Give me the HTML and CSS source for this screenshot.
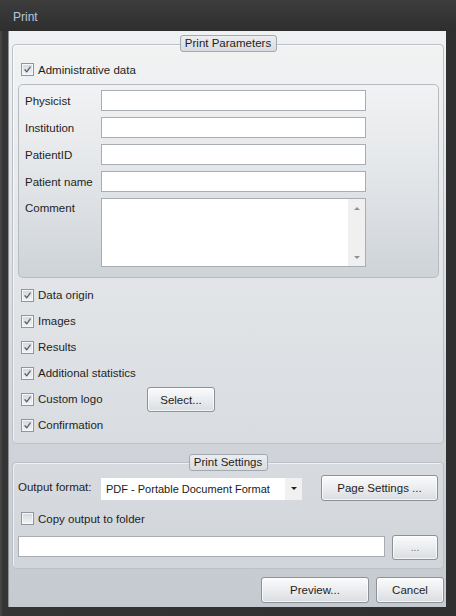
FILE: index.html
```html
<!DOCTYPE html>
<html>
<head>
<meta charset="utf-8">
<title>Print</title>
<link rel="stylesheet" href="styles.css">
</head>
<body>
<div class="window">
  <div class="titlebar">Print</div>
  <div class="client">
    <div class="group group-params">
      <div class="legend legend-params">Print Parameters</div>
      <div class="check check-admin"><span class="box checked"><svg viewBox="0 0 13 13"><path d="M3.5 6.8 L5.6 9.2 L9.6 3.6"/></svg></span>Administrative data</div>
      <div class="admin">
        <div class="field-row"><span class="flabel">Physicist</span><span class="input"></span></div>
        <div class="field-row"><span class="flabel">Institution</span><span class="input"></span></div>
        <div class="field-row"><span class="flabel">PatientID</span><span class="input"></span></div>
        <div class="field-row"><span class="flabel">Patient name</span><span class="input"></span></div>
        <div class="field-row comment-row"><span class="flabel">Comment</span><span class="textarea"><span class="scroll"><span class="arrow up"></span><span class="arrow down"></span></span></span></div>
      </div>
      <div class="checks">
        <div class="check-row"><span class="check"><span class="box checked"><svg viewBox="0 0 13 13"><path d="M3.5 6.8 L5.6 9.2 L9.6 3.6"/></svg></span>Data origin</span></div>
        <div class="check-row"><span class="check"><span class="box checked"><svg viewBox="0 0 13 13"><path d="M3.5 6.8 L5.6 9.2 L9.6 3.6"/></svg></span>Images</span></div>
        <div class="check-row"><span class="check"><span class="box checked"><svg viewBox="0 0 13 13"><path d="M3.5 6.8 L5.6 9.2 L9.6 3.6"/></svg></span>Results</span></div>
        <div class="check-row"><span class="check"><span class="box checked"><svg viewBox="0 0 13 13"><path d="M3.5 6.8 L5.6 9.2 L9.6 3.6"/></svg></span>Additional statistics</span></div>
        <div class="check-row"><span class="check check-wide"><span class="box checked"><svg viewBox="0 0 13 13"><path d="M3.5 6.8 L5.6 9.2 L9.6 3.6"/></svg></span>Custom logo</span><span class="btn btn-select">Select...</span></div>
        <div class="check-row"><span class="check"><span class="box checked"><svg viewBox="0 0 13 13"><path d="M3.5 6.8 L5.6 9.2 L9.6 3.6"/></svg></span>Confirmation</span></div>
      </div>
    </div>
    <div class="group group-settings">
      <div class="legend legend-settings">Print Settings</div>
      <div class="out-row">
        <span class="olabel">Output format:</span>
        <span class="combo"><span class="combo-text">PDF - Portable Document Format</span><span class="combo-arrow"><span class="tri"></span></span></span>
        <span class="btn btn-page">Page Settings ...</span>
      </div>
      <div class="check copy-row"><span class="box"></span>Copy output to folder</div>
      <div class="folder-row"><span class="input folder"></span><span class="btn btn-dots">...</span></div>
    </div>
    <div class="footer"><span class="btn btn-preview">Preview...</span><span class="btn btn-cancel">Cancel</span></div>
  </div>
</div>
</body>
</html>
```

FILE: styles.css
```css
html, body {
  margin: 0;
  padding: 0;
  background: #2f2f2f;
}
body {
  font-family: "Liberation Sans", Arial, sans-serif;
  font-size: 11.5px;
  color: #1e1e1e;
}
.window {
  width: 456px;
  height: 616px;
  box-sizing: border-box;
  background: linear-gradient(to right, #4a4a4a 0px, #343434 3px, #303030 100%);
  padding: 0 10px 9px 8px;
  display: flex;
  flex-direction: column;
}
.titlebar {
  height: 31px;
  box-sizing: border-box;
  padding: 10px 0 0 13px;
  color: #b7c8dd;
  font-size: 12px;
  background: linear-gradient(#3d3d3d, #2e2e2e);
  margin: 0 -10px 0 -8px;
}
.client {
  flex: 1;
  background: linear-gradient(#eff1f2 0%, #e0e3e6 35%, #d1d5da 70%, #c5cad0 100%);
  display: flex;
  flex-direction: column;
  box-shadow: inset 1px 0 0 #8d9298;
}
.group {
  margin: 0 2px 0 4px;
  border: 1px solid #bcc1c7;
  border-radius: 4px;
  background: rgba(255, 255, 255, 0.18);
  box-shadow: inset 1px 1px 0 rgba(255,255,255,0.6);
  display: flex;
  flex-direction: column;
}
.group-params {
  margin-top: 13px;
  padding-bottom: 5px;
}
.group-params .legend {
  margin-top: -10px;
  margin-bottom: 1px;
}
.group-settings {
  margin-top: 18px;
  padding: 0 5px 8px 5px;
}
.legend {
  align-self: center;
  height: 17px;
  box-sizing: border-box;
  margin-top: -9px;
  border: 1px solid #a4a9b0;
  border-radius: 3px;
  background: linear-gradient(#eceef0, #d8dce0);
  line-height: 15px;
  font-size: 11.5px;
  text-align: center;
  color: #1e1e1e;
}
.legend-params { width: 97px; }
.legend-settings { width: 79px; }
.check {
  display: flex;
  align-items: center;
  gap: 4px;
  height: 13px;
}
.check-admin {
  margin: 10px 0 0 8px;
}
.box {
  width: 13px;
  height: 13px;
  box-sizing: border-box;
  border: 1px solid #8f969e;
  background: linear-gradient(#d3d7dc, #f4f5f6);
  box-shadow: inset 0 0 0 1px #f6f7f8;
  flex: none;
  display: flex;
}
.box svg {
  width: 11px;
  height: 11px;
}
.box path {
  fill: none;
  stroke: #56636f;
  stroke-width: 1.5;
  stroke-linejoin: round;
  stroke-linecap: round;
}
.admin {
  margin: 8px 4px 0 5px;
  border: 1px solid #b7bcc2;
  border-radius: 5px;
  background: linear-gradient(#f1f2f3, #e2e5e8 50%, #ced3d8);
  padding: 5px 0 10px 6px;
  display: flex;
  flex-direction: column;
  gap: 6px;
}
.field-row {
  display: flex;
  align-items: center;
}
.comment-row {
  align-items: flex-start;
}
.comment-row .flabel {
  padding-top: 4px;
}
.flabel {
  width: 76px;
  flex: none;
}
.input {
  width: 265px;
  height: 21px;
  box-sizing: border-box;
  border: 1px solid #a8adb3;
  background: #ffffff;
  display: block;
}
.textarea {
  width: 265px;
  height: 69px;
  box-sizing: border-box;
  border: 1px solid #a8adb3;
  background: #ffffff;
  display: flex;
  justify-content: flex-end;
}
.scroll {
  width: 17px;
  background: #f0f0f0;
  display: flex;
  flex-direction: column;
  justify-content: space-between;
  align-items: center;
  padding: 8px 0 7px 0;
}
.arrow {
  width: 0;
  height: 0;
  border-left: 3px solid transparent;
  border-right: 3px solid transparent;
}
.arrow.up { border-bottom: 3px solid #8d9196; }
.arrow.down { border-top: 3px solid #8d9196; }
.checks {
  margin-top: 4px;
  display: flex;
  flex-direction: column;
}
.check-row {
  height: 26px;
  display: flex;
  align-items: center;
  padding-left: 8px;
}
.check-wide {
  width: 126px;
}
.btn {
  box-sizing: border-box;
  border: 1px solid #8c9198;
  border-radius: 3px;
  background: linear-gradient(#fbfbfc, #eceef0 45%, #dadde1);
  box-shadow: inset 0 0 0 1px rgba(255,255,255,0.7);
  display: flex;
  align-items: center;
  justify-content: center;
  color: #1e1e1e;
  font-size: 11.5px;
}
.btn-select {
  width: 68px;
  height: 25px;
  margin-top: 1px;
}
.out-row {
  margin-top: 4px;
  height: 26px;
  display: flex;
  align-items: center;
}
.olabel {
  width: 83px;
  flex: none;
  margin-top: -2px;
}
.combo {
  width: 201px;
  height: 22px;
  background: #ffffff;
  display: flex;
  align-items: center;
  margin-top: 1px;
}
.combo-text {
  flex: 1;
  padding-left: 5px;
  font-size: 11px;
  color: #1a1a1a;
  white-space: nowrap;
}
.combo-arrow {
  width: 17px;
  height: 22px;
  background: #f1f1f1;
  display: flex;
  align-items: center;
  justify-content: center;
}
.tri {
  width: 0;
  height: 0;
  border-left: 3px solid transparent;
  border-right: 3px solid transparent;
  border-top: 3px solid #222;
}
.btn-page {
  margin-left: auto;
  width: 117px;
  height: 26px;
}
.copy-row {
  margin: 11px 0 0 3px;
}
.folder-row {
  margin-top: 10px;
  display: flex;
  justify-content: space-between;
  align-items: flex-start;
}
.folder {
  width: 367px;
  margin-top: 1px;
}
.btn-dots {
  width: 46px;
  height: 25px;
  color: #6a6e73;
  font-size: 10px;
}
.footer {
  margin: 8px 2px 0 0;
  display: flex;
  justify-content: flex-end;
  gap: 7px;
}
.btn-preview {
  width: 108px;
  height: 26px;
}
.btn-cancel {
  width: 68px;
  height: 26px;
}
```
